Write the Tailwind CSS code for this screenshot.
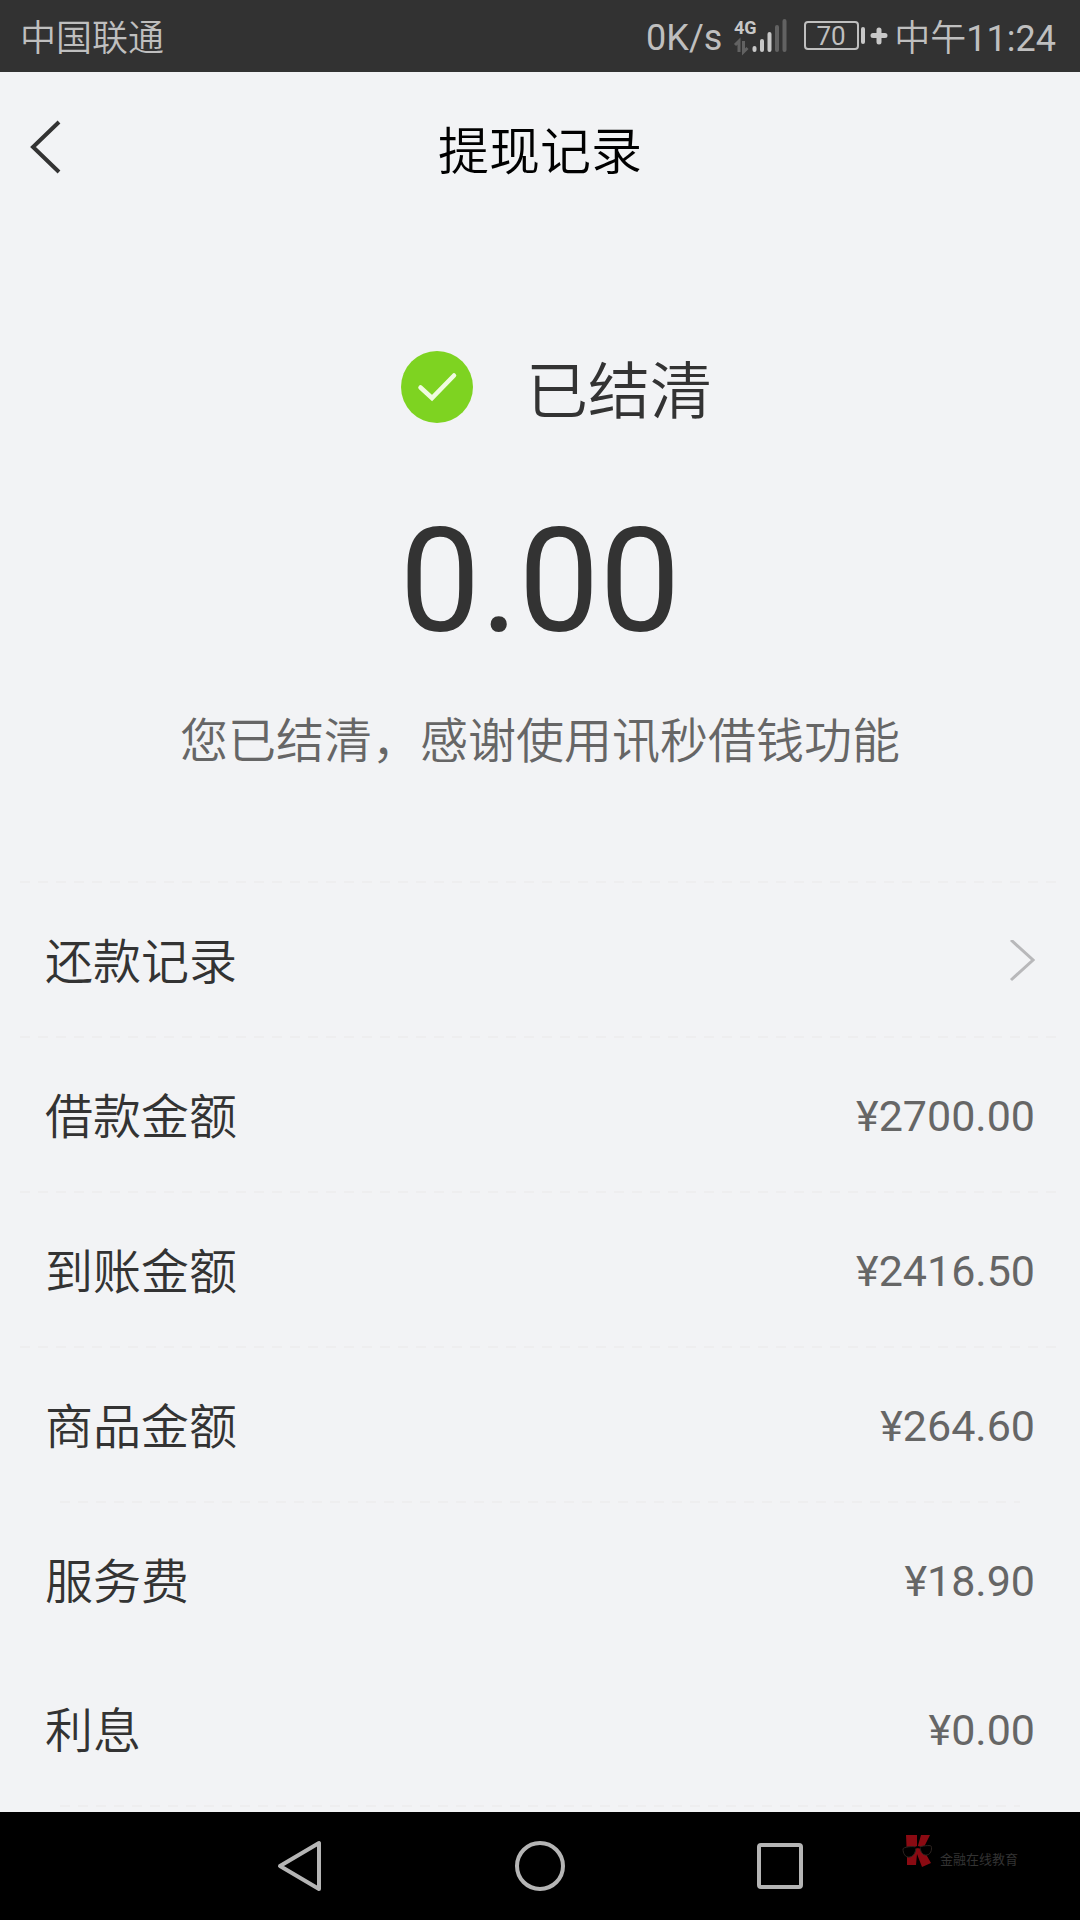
<!DOCTYPE html>
<html lang="zh-CN">
<head>
    <meta charset="UTF-8">
    <meta name="viewport" content="width=device-width, initial-scale=1.0">
    <title>提现记录</title>
    <script src="https://cdn.jsdelivr.net/npm/@tailwindcss/browser@4"></script>
</head>
<body class="flex min-h-screen flex-col bg-[#f2f3f5] font-[Roboto,'Noto_Sans_CJK_SC',sans-serif] text-[#333333]">
    <!-- Status bar -->
    <div class="flex h-[72px] items-center justify-between bg-[#323232] pt-1 pr-6 pl-5 text-[36px] leading-none text-[#bfbfbf]">
        <span class="pt-[2px] font-[350]">中国联通</span>
        <div class="flex items-center">
            <span>0K/s</span>
            <svg class="ml-3 h-9 w-[54px] overflow-visible" viewBox="0 0 54 36" fill="none" stroke-linecap="round" stroke-width="4">
                <text x="0" y="14" font-size="18" font-weight="700" fill="#c8c8c8">4G</text>
                <path d="M1 25l4-4v11M9.500 21v11l4-4" stroke="#626262" stroke-width="3" stroke-linecap="butt"/>
                <path d="M20.500 28v2M28 21v9M35.500 14v16" stroke="#c8c8c8"/>
                <path d="M43 7v23M50.500 1v29" stroke="#626262"/>
            </svg>
            <svg class="ml-[14px] h-9 w-[86px]" viewBox="0 0 86 36" fill="none">
                <rect x="3" y="2" width="53" height="27" rx="3" stroke="#bfbfbf" stroke-width="2"/>
                <text x="29" y="25" text-anchor="middle" font-size="26" fill="#bfbfbf">70</text>
                <path d="M61 9v13" stroke="#c8c8c8" stroke-width="4" stroke-linecap="round"/>
                <path d="M71 15.500h12M77 10v12" stroke="#c8c8c8" stroke-width="5" stroke-linecap="round"/>
            </svg>
            <span class="ml-[6px] pt-[2px] font-[350]">中午<span class="font-normal">11:24</span></span>
        </div>
    </div>

    <!-- Title bar -->
    <header class="grid h-[156px] grid-cols-[1fr_auto_1fr] items-center px-7">
        <button type="button" aria-label="返回" class="w-10">
            <svg class="h-[60px] w-10" viewBox="0 0 40 60" fill="none" stroke="#333333" stroke-width="4">
                <path d="M31 2L5 27l26 25"/>
            </svg>
        </button>
        <h1 class="pt-1 text-[51px] leading-none font-[350] text-black">提现记录</h1>
    </header>

    <!-- Settlement result -->
    <main class="flex grow flex-col">
        <section class="flex h-[653px] flex-col items-center pt-[122px]">
            <div class="flex items-center gap-[52px] pl-8">
                <svg class="size-[74px]" viewBox="0 0 74 74" fill="none">
                    <circle cx="37" cy="37" r="36" fill="#7ed321"/>
                    <path d="M20.500 37.500L32 48l22-22.500" stroke="#f0fbe0" stroke-width="4.500" stroke-linecap="round" stroke-linejoin="miter"/>
                </svg>
                <h2 class="pt-3 text-[62px] leading-none font-[350]">已结清</h2>
            </div>
            <p class="mt-[86px] text-[144px] leading-none">0.00</p>
            <p class="mt-16 text-[48px] leading-none font-[350] text-[#666666]">您已结清，感谢使用讯秒借钱功能</p>
        </section>

        <!-- Details -->
        <div class="mr-6 ml-5 h-[2px] bg-[repeating-linear-gradient(90deg,#eeeeef_0_10px,transparent_10px_18px)]"></div>
        <a href="#" class="flex h-[153px] items-center justify-between px-[45px] pt-1 text-[48px] leading-none">
            <span class="pt-[2px] font-[350]">还款记录</span>
            <svg class="h-11 w-7" viewBox="0 0 28 44" fill="none" stroke="#b8b8ba" stroke-width="3">
                <path d="M4 0l22 20L4 40"/>
            </svg>
        </a>
        <dl class="text-[48px] leading-none">
            <div class="mr-6 ml-5 h-[2px] bg-[repeating-linear-gradient(90deg,#eeeeef_0_10px,transparent_10px_18px)]"></div>
            <div class="flex h-[153px] items-center justify-between px-[45px] pt-1">
                <dt class="pt-[2px] font-[350]">借款金额</dt>
                <dd class="text-[43px] text-[#666666]">¥2700.00</dd>
            </div>
            <div class="mr-6 ml-5 h-[2px] bg-[repeating-linear-gradient(90deg,#eeeeef_0_10px,transparent_10px_18px)]"></div>
            <div class="flex h-[153px] items-center justify-between px-[45px] pt-1">
                <dt class="pt-[2px] font-[350]">到账金额</dt>
                <dd class="text-[43px] text-[#666666]">¥2416.50</dd>
            </div>
            <div class="mr-6 ml-5 h-[2px] bg-[repeating-linear-gradient(90deg,#eeeeef_0_10px,transparent_10px_18px)]"></div>
            <div class="flex h-[153px] items-center justify-between px-[45px] pt-1">
                <dt class="pt-[2px] font-[350]">商品金额</dt>
                <dd class="text-[43px] text-[#666666]">¥264.60</dd>
            </div>
            <div class="mx-15 h-[2px] bg-[repeating-linear-gradient(90deg,#eeeeef_0_10px,transparent_10px_18px)]"></div>
            <div class="flex h-[153px] items-center justify-between px-[45px] pt-1">
                <dt class="pt-[2px] font-[350]">服务费</dt>
                <dd class="text-[43px] text-[#666666]">¥18.90</dd>
            </div>
            <div class="flex h-[149px] items-center justify-between px-[45px]">
                <dt class="pt-[2px] font-[350]">利息</dt>
                <dd class="text-[43px] text-[#666666]">¥0.00</dd>
            </div>
            <div class="mx-15 h-[2px] bg-[repeating-linear-gradient(90deg,#eeeeef_0_10px,transparent_10px_18px)]"></div>
        </dl>
    </main>

    <!-- System navigation -->
    <nav class="relative h-[108px] bg-black">
        <div class="mx-auto flex h-full w-2/3 items-center justify-around">
            <button type="button" aria-label="后退">
                <svg class="size-[52px]" viewBox="0 0 52 52" fill="none" stroke="#b5b5b5" stroke-width="4" stroke-linejoin="round">
                    <path d="M45 3v46L6 26z"/>
                </svg>
            </button>
            <button type="button" aria-label="主页">
                <svg class="size-[52px]" viewBox="0 0 52 52" fill="none" stroke="#b5b5b5" stroke-width="4">
                    <circle cx="26" cy="26" r="23"/>
                </svg>
            </button>
            <button type="button" aria-label="最近任务">
                <svg class="size-[52px]" viewBox="0 0 52 52" fill="none" stroke="#b5b5b5" stroke-width="4">
                    <rect x="5" y="5" width="42" height="42" rx="2"/>
                </svg>
            </button>
        </div>
        <div class="absolute top-5 right-[62px] flex items-end gap-[6px]">
            <svg class="h-9 w-8" viewBox="0 0 32 36">
                <path d="M4 3h11v14l4-14h9l-7 14 8 14-9 4-5-13-1 11H5V25z" fill="#8a0a12"/>
                <path d="M1 17c0-2 10-3 12-2s0 9-5 10-7-4-7-8zM18 15c1-1 10-2 11-1s1 8-4 9-7-5-7-8z" fill="#000" stroke="#2d2420" stroke-width="1"/>
                <path d="M13 16q3-2 5 0" fill="none" stroke="#000" stroke-width="2"/>
            </svg>
            <span class="text-[13px] leading-4 text-[#333333]">金融在线教育</span>
        </div>
    </nav>
</body>
</html>
